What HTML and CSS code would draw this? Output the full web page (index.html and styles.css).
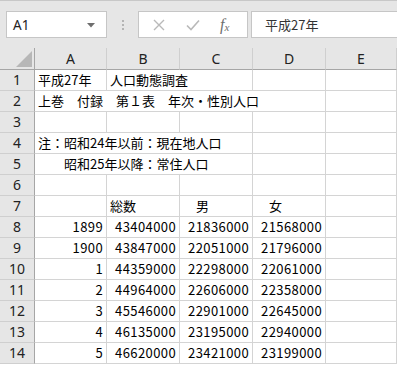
FILE: index.html
```html
<!DOCTYPE html>
<html lang="ja">
<head>
  <meta charset="UTF-8" />
  <title>Sheet</title>
  <link rel="stylesheet" href="styles.css">
</head>
<body>
  <div class="toolbar">
    <div class="namebox">
      <span>A1</span>
      <svg class="drop" width="8" height="5" viewBox="0 0 8 5"><path d="M0 0h8L4 4.5z" fill="#6e6e6e"/></svg>
    </div>
    <div class="dots"><i></i><i></i><i></i></div>
    <div class="fbuttons">
      <svg width="12" height="12" viewBox="0 0 12 12"><path d="M1 1l10 10M11 1L1 11" stroke="#b9b9b9" stroke-width="1.4" fill="none"/></svg>
      <svg width="14" height="12" viewBox="0 0 14 12"><path d="M1 6.5l4 4L13 1.5" stroke="#b9b9b9" stroke-width="1.6" fill="none"/></svg>
      <span class="fx">f<sub>x</sub></span>
    </div>
    <div class="formula">平成27年</div>
  </div>

  <div class="sheet">
    <div class="corner"><span class="tri"></span></div>
    <div class="colhead">A</div>
    <div class="colhead">B</div>
    <div class="colhead">C</div>
    <div class="colhead">D</div>
    <div class="colhead">E</div>

    <div class="rowhead">1</div>
    <div class="cell">平成27年</div>
    <div class="cell span2">人口動態調査</div>
    <div class="cell"></div>
    <div class="cell"></div>

    <div class="rowhead">2</div>
    <div class="cell span4">上巻　付録　第１表　年次・性別人口</div>
    <div class="cell"></div>

    <div class="rowhead">3</div>
    <div class="cell"></div>
    <div class="cell"></div>
    <div class="cell"></div>
    <div class="cell"></div>
    <div class="cell"></div>

    <div class="rowhead">4</div>
    <div class="cell span3">注：昭和24年以前：現在地人口</div>
    <div class="cell"></div>
    <div class="cell"></div>

    <div class="rowhead">5</div>
    <div class="cell span3">　　昭和25年以降：常住人口</div>
    <div class="cell"></div>
    <div class="cell"></div>

    <div class="rowhead">6</div>
    <div class="cell"></div>
    <div class="cell"></div>
    <div class="cell"></div>
    <div class="cell"></div>
    <div class="cell"></div>

    <div class="rowhead">7</div>
    <div class="cell"></div>
    <div class="cell">総数</div>
    <div class="cell">　男</div>
    <div class="cell">　女</div>
    <div class="cell"></div>

    <div class="rowhead">8</div>
    <div class="cell num">1899</div>
    <div class="cell num">43404000</div>
    <div class="cell num">21836000</div>
    <div class="cell num">21568000</div>
    <div class="cell"></div>

    <div class="rowhead">9</div>
    <div class="cell num">1900</div>
    <div class="cell num">43847000</div>
    <div class="cell num">22051000</div>
    <div class="cell num">21796000</div>
    <div class="cell"></div>

    <div class="rowhead">10</div>
    <div class="cell num">1</div>
    <div class="cell num">44359000</div>
    <div class="cell num">22298000</div>
    <div class="cell num">22061000</div>
    <div class="cell"></div>

    <div class="rowhead">11</div>
    <div class="cell num">2</div>
    <div class="cell num">44964000</div>
    <div class="cell num">22606000</div>
    <div class="cell num">22358000</div>
    <div class="cell"></div>

    <div class="rowhead">12</div>
    <div class="cell num">3</div>
    <div class="cell num">45546000</div>
    <div class="cell num">22901000</div>
    <div class="cell num">22645000</div>
    <div class="cell"></div>

    <div class="rowhead">13</div>
    <div class="cell num">4</div>
    <div class="cell num">46135000</div>
    <div class="cell num">23195000</div>
    <div class="cell num">22940000</div>
    <div class="cell"></div>

    <div class="rowhead">14</div>
    <div class="cell num">5</div>
    <div class="cell num">46620000</div>
    <div class="cell num">23421000</div>
    <div class="cell num">23199000</div>
    <div class="cell"></div>
  </div>
</body>
</html>
```

FILE: styles.css
```css
body {
  margin: 0;
  background: #e6e6e6;
  overflow: hidden;
  height: 100vh;
  font-family: "Noto Sans", "Noto Sans CJK JP", sans-serif;
  color: #222;
}
.toolbar {
  height: 48px;
  box-sizing: border-box;
  border-top: 1px solid #c8c8c8;
  padding-top: 10px;
  display: flex;
  align-items: flex-start;
}
.namebox {
  margin-left: 6px;
  width: 101px;
  height: 27px;
  box-sizing: border-box;
  background: #fff;
  border: 1px solid #c6c6c6;
  display: flex;
  align-items: center;
  justify-content: space-between;
  padding: 0 11px 0 6px;
  font-size: 13.5px;
}
.drop {
  margin-top: 1px;
}
.dots {
  width: 31px;
  height: 27px;
  display: flex;
  flex-direction: column;
  align-items: center;
  justify-content: center;
  gap: 2px;
}
.dots i {
  width: 2px;
  height: 2px;
  background: #b4b4b4;
}
.fbuttons {
  width: 110px;
  height: 27px;
  box-sizing: border-box;
  background: #fff;
  border: 1px solid #c6c6c6;
  display: flex;
  align-items: center;
  padding-left: 14px;
  gap: 21px;
}
.fx {
  font-family: "Liberation Serif", serif;
  font-style: italic;
  font-size: 16px;
  color: #6e6e6e;
  margin-left: -1px;
}
.fx sub {
  font-size: 11px;
  vertical-align: -1px;
}
.formula {
  margin-left: 3px;
  flex: 1;
  height: 27px;
  box-sizing: border-box;
  background: #fff;
  border: 1px solid #c6c6c6;
  border-right: none;
  padding-left: 13px;
  line-height: 25px;
  font-family: "Noto Sans CJK JP", sans-serif;
  font-size: 13px;
  color: #333;
}
.sheet {
  display: grid;
  grid-template-columns: 35px 72px 73px 73px 73px 1fr;
  grid-template-rows: 22px;
  grid-auto-rows: 21px;
  background: #fff;
  height: 317px;
}
.corner {
  background: #e6e6e6;
  border-right: 1px solid #a6a6a6;
  border-bottom: 1px solid #a6a6a6;
  position: relative;
}
.tri {
  position: absolute;
  right: 2px;
  bottom: 2px;
  width: 0;
  height: 0;
  border-left: 16px solid transparent;
  border-bottom: 16px solid #b7b7b7;
}
.colhead {
  background: #e6e6e6;
  border-right: 1px solid #cfcfcf;
  border-bottom: 1px solid #a6a6a6;
  text-align: center;
  font-size: 14px;
  line-height: 22px;
  color: #222;
}
.rowhead {
  background: #e6e6e6;
  border-right: 1px solid #a6a6a6;
  border-bottom: 1px solid #cfcfcf;
  text-align: center;
  font-size: 14px;
  line-height: 20px;
  color: #222;
}
.cell {
  border-right: 1px solid #d4d4d4;
  border-bottom: 1px solid #d4d4d4;
  padding: 0 3px;
  font-family: "Noto Sans CJK JP", sans-serif;
  font-size: 13px;
  line-height: 20px;
  white-space: nowrap;
  color: #000;
}
.num {
  text-align: right;
  letter-spacing: 0.4px;
}
.span2 { grid-column: span 2; }
.span3 { grid-column: span 3; }
.span4 { grid-column: span 4; }
```
